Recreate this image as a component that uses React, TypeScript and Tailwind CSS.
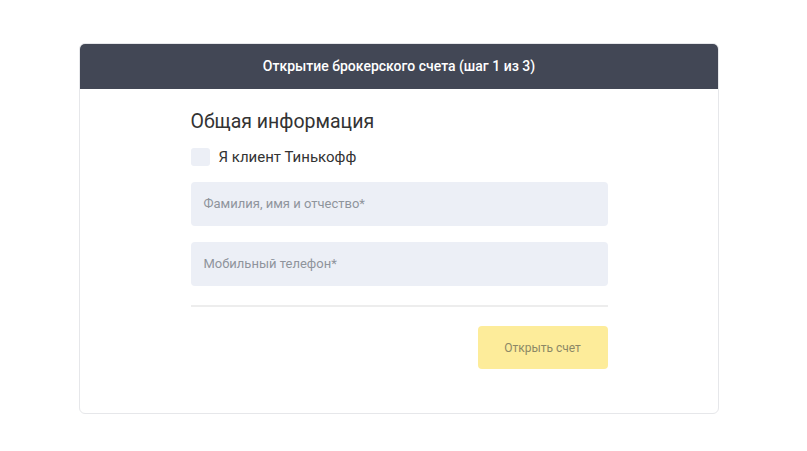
export default function App() {
  return (
    <div className="min-h-[451px] w-full bg-white pt-[43px] font-['Roboto',sans-serif]">
      <div className="ml-[79px] w-[640px] overflow-hidden rounded-[6px] border border-[#e6e7ea] bg-white">
        {/* шапка */}
        <div className="flex h-[45px] items-center justify-center bg-[#424755] text-[14px] font-medium text-white">
          Открытие брокерского счета (шаг 1 из 3)
        </div>

        <div className="mx-auto w-[417px] pb-[44px] pt-[18px]">
          <h2 className="text-[19.5px] leading-[30px] text-[#333]">Общая информация</h2>

          <label className="mt-[11px] flex items-center gap-[9px]">
            <span className="h-[18px] w-[19px] rounded-[3px] bg-[#eceff6]" />
            <span className="text-[15px] leading-[18px] text-[#333]">Я клиент Тинькофф</span>
          </label>

          <div className="mt-[16px] flex h-[44px] items-center rounded-[4px] bg-[#eceff6] px-[13px] text-[13px] text-[#8f949c]">
            Фамилия, имя и отчество*
          </div>
          <div className="mt-[16px] flex h-[44px] items-center rounded-[4px] bg-[#eceff6] px-[13px] text-[13px] text-[#8f949c]">
            Мобильный телефон*
          </div>

          <div className="mt-[19px] h-[2px] bg-[#ededed]" />

          <div className="mt-[19px] flex justify-end">
            <button className="h-[43px] w-[130px] rounded-[4px] bg-[#fdec9a] text-[12px] text-[#8c8866]">
              Открыть счет
            </button>
          </div>
        </div>
      </div>
    </div>
  );
}
